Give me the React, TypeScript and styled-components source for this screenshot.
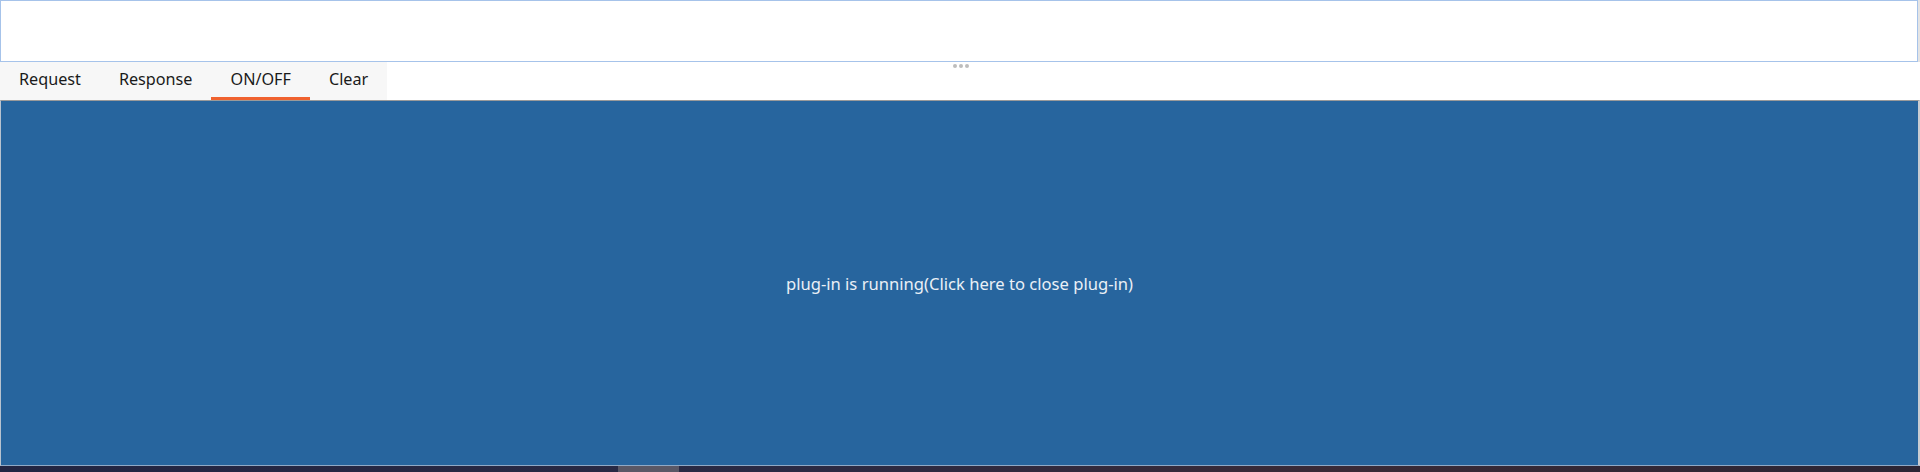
import React from "react";
import styled, { createGlobalStyle } from "styled-components";

const Global = createGlobalStyle`
  html, body { margin: 0; padding: 0; background: #ffffff; overflow: hidden; }
  body { font-family: "Noto Sans", "Open Sans", sans-serif; }
  * { box-sizing: border-box; }
`;

const Page = styled.div`
  width: 1920px;
  height: 472px;
  display: flex;
  flex-direction: column;
  background: #ffffff;
`;

const TopRow = styled.div`
  display: flex;
  height: 62px;
`;

const Editor = styled.textarea`
  flex: 1;
  height: 62px;
  margin: 0;
  border: 1px solid #a6c3ea;
  background: #ffffff;
  resize: none;
  outline: none;
  padding: 4px;
`;

const SideStrip = styled.div`
  width: 2px;
  background: #e4e4e4;
`;

const TabBar = styled.div`
  position: relative;
  display: flex;
  align-items: stretch;
  height: 38px;
  background: #ffffff;
`;

const TabStrip = styled.div`
  display: flex;
  background: #f7f7f7;
`;

const Tab = styled.div<{ $active?: boolean }>`
  display: flex;
  align-items: center;
  padding: 0 19px 2px;
  font-size: 16.2px;
  color: #1a1a1a;
  cursor: pointer;
  border-bottom: 3px solid ${(p) => (p.$active ? "#f0622f" : "transparent")};
`;

const Grip = styled.div`
  position: absolute;
  top: 2px;
  left: 953px;
  display: flex;
  gap: 2px;
`;

const Dot = styled.span`
  width: 4px;
  height: 4px;
  border-radius: 50%;
  background: #bdbdbd;
`;

const Panel = styled.div`
  flex: 1;
  display: flex;
  align-items: center;
  justify-content: center;
  background: #27659e;
  border-top: 1px solid #9a9a9a;
  border-left: 1px solid #b8c3cf;
  border-right: 2px solid #c8ccd2;
  border-bottom: 1px solid #8fa9c6;
  color: #eaf0f6;
  font-size: 16.6px;
  cursor: pointer;
`;

const Message = styled.span`
  margin-top: 1px;
`;

const BottomBar = styled.div`
  height: 6px;
  display: flex;
  background: linear-gradient(90deg, #222542 0%, #2a2a44 40%, #3a2a36 70%, #2b2535 100%);
`;

const BottomThumb = styled.div`
  margin-left: 618px;
  width: 61px;
  background: #5a5866;
`;

export default function App() {
  return (
    <Page>
      <Global />
      <TopRow>
        <Editor />
        <SideStrip />
      </TopRow>
      <TabBar>
        <TabStrip>
          <Tab>Request</Tab>
          <Tab>Response</Tab>
          <Tab $active>ON/OFF</Tab>
          <Tab>Clear</Tab>
        </TabStrip>
        <Grip>
          <Dot />
          <Dot />
          <Dot />
        </Grip>
      </TabBar>
      <Panel>
        <Message>plug-in is running(Click here to close plug-in)</Message>
      </Panel>
      <BottomBar>
        <BottomThumb />
      </BottomBar>
    </Page>
  );
}
